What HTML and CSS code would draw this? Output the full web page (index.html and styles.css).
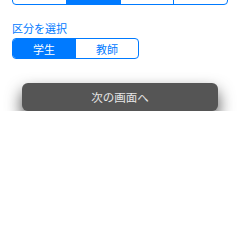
FILE: index.html
```html
<!DOCTYPE html>
<html lang="ja">

<head>
    <meta charset="UTF-8">
    <meta name="viewport" content="width=device-width, initial-scale=1.0">
    <title>区分を選択</title>
    <link rel="stylesheet" href="styles.css">
</head>

<body>

    <div class="container">
        <!-- top control is scrolled mostly out of view -->
        <div class="segment segment-top">
            <div class="seg-item"></div>
            <div class="seg-item active"></div>
            <div class="seg-item"></div>
            <div class="seg-item"></div>
        </div>

        <div class="label">区分を選択</div>
        <div class="segment segment-kind">
            <div class="seg-item active">学生</div>
            <div class="seg-item">教師</div>
        </div>

        <button class="next-btn" type="button">次の画面へ</button>
    </div>

</body>

</html>
```

FILE: styles.css
```css
body {
    font-family: "Noto Sans CJK JP", "Noto Sans", sans-serif;
    margin: 0;
    padding: 0;
    background-color: #fff;
    overflow: hidden;
}

.container {
    padding: 0 12px;
}

.segment {
    display: flex;
    border: 1px solid #007aff;
    border-radius: 4px;
    overflow: hidden;
    box-sizing: border-box;
}

.seg-item {
    flex: 1;
    display: flex;
    align-items: center;
    justify-content: center;
    font-size: 11px;
    color: #007aff;
    border-left: 1px solid #007aff;
}

.seg-item:first-child {
    border-left: none;
}

.seg-item.active {
    background-color: #007aff;
    color: #fff;
}

.segment-top {
    height: 22px;
    margin-top: -17px;
}

.label {
    font-size: 11px;
    line-height: 14px;
    color: #007aff;
    margin-top: 16px;
}

.segment-kind {
    width: 127px;
    height: 21px;
    margin-top: 3px;
}

.next-btn {
    display: block;
    width: 196px;
    height: 28px;
    margin: 24px 10px 0;
    border: none;
    border-radius: 6px;
    background-color: #555;
    color: #e6e6e6;
    font-family: inherit;
    font-size: 11.5px;
    box-shadow: 0 8px 16px rgba(0, 0, 0, 0.7);
}
```
